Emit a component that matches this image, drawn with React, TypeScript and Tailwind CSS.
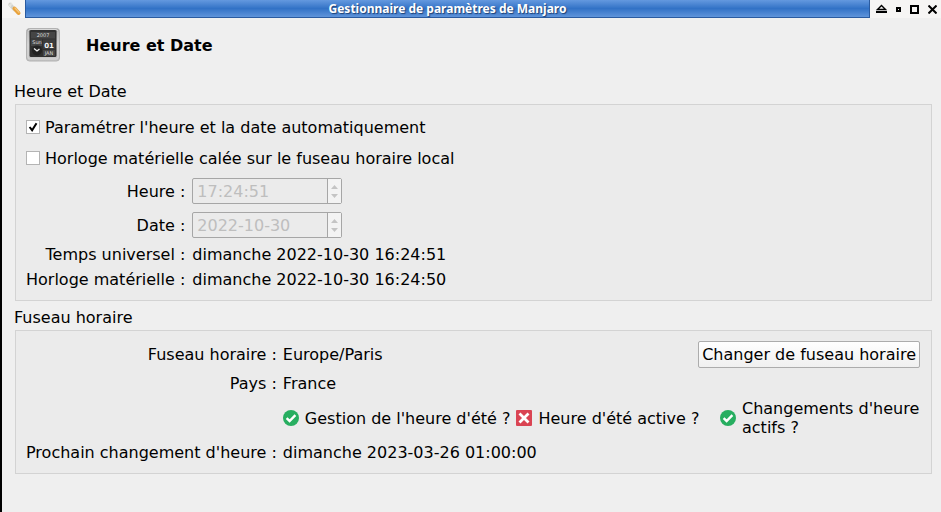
import { useState } from "react";
import type { ReactNode } from "react";

const universalTime = "dimanche 2022-10-30 16:24:51";
const hardwareClock = "dimanche 2022-10-30 16:24:50";

function WrenchIcon() {
  return (
    <svg width="16" height="16" viewBox="0 0 16 16" aria-hidden="true">
      <path d="M4 3.5 8.5 8.5" stroke="#d2d2cd" strokeWidth="3.6" strokeLinecap="round" />
      <path d="M2.4 3.6 4.4 5 5.6 1.8" stroke="#e6e6e0" strokeWidth="1.6" fill="none" />
      <path d="M8.5 7.5 12.5 12" stroke="#e9a23b" strokeWidth="4" strokeLinecap="round" />
      <path d="M9 7 13 11.4" stroke="#f6c77c" strokeWidth="1.2" strokeLinecap="round" />
    </svg>
  );
}

function ClockIcon() {
  return (
    <svg width="34" height="34" viewBox="0 0 34 34" aria-hidden="true" fontFamily="DejaVu Sans, sans-serif">
      <defs>
        <linearGradient id="frame" x1="0" y1="0" x2="0" y2="1">
          <stop offset="0" stopColor="#9c9c9c" />
          <stop offset="0.5" stopColor="#cfcfcf" />
          <stop offset="1" stopColor="#c4c4c4" />
        </linearGradient>
      </defs>
      <rect x="0.5" y="0.5" width="33" height="32.5" rx="3" fill="url(#frame)" stroke="#b2b2b2" />
      <rect x="2" y="1.5" width="30" height="29.5" rx="2" fill="none" stroke="#d8d8d8" />
      <rect x="3.5" y="2" width="27" height="27" rx="1.5" fill="#303030" />
      <rect x="5" y="4" width="24" height="6.5" fill="#454545" />
      <rect x="5" y="11.5" width="11" height="6.5" fill="#454545" />
      <rect x="17" y="11.5" width="12" height="9.5" fill="#3c3c3c" />
      <rect x="17" y="22" width="12" height="6" fill="#454545" />
      <circle cx="11" cy="22.5" r="5" fill="#222222" />
      <path d="M8 20.5 11 23 13.5 21" stroke="#f0f0f0" strokeWidth="1.3" fill="none" />
      <text x="17" y="9" fontSize="5" fill="#dddddd" textAnchor="middle">2007</text>
      <text x="11" y="16" fontSize="5" fill="#dddddd" textAnchor="middle">Sun</text>
      <text x="23" y="19.5" fontSize="7" fontWeight="bold" fill="#f4f4f4" textAnchor="middle">01</text>
      <text x="23" y="27" fontSize="5" fill="#dddddd" textAnchor="middle">JAN</text>
    </svg>
  );
}

function StatusIcon({ ok }: { ok: boolean }) {
  return ok ? (
    <svg className="shrink-0" width="16" height="16" viewBox="0 0 16 16" role="img" aria-label="Oui">
      <circle cx="8" cy="8" r="8" fill="#27ae60" />
      <path d="M3.6 8.2 6.6 11 12.4 5.2" stroke="#ffffff" strokeWidth="2.4" fill="none" />
    </svg>
  ) : (
    <svg className="shrink-0" width="16" height="16" viewBox="0 0 16 16" role="img" aria-label="Non">
      <rect width="16" height="16" rx="1" fill="#da4453" />
      <path d="M3.5 3.5 12.5 12.5M12.5 3.5 3.5 12.5" stroke="#ffffff" strokeWidth="2.8" />
    </svg>
  );
}

function TitleBar() {
  return (
    <header className="flex h-[18px] items-stretch bg-[#f6f5f4]">
      <div className="flex w-[23px] items-center pl-1">
        <WrenchIcon />
      </div>
      <h1 className="flex flex-1 items-center justify-center border-r border-b border-l border-[#2a5ba0] bg-linear-to-b from-[#6499df] via-[#3272c6] to-[#5f94da] pt-px font-['Noto_Sans',sans-serif] text-xs font-bold text-white [text-shadow:1px_1px_1px_#1d4075]">
        Gestionnaire de paramètres de Manjaro
      </h1>
      <div className="flex w-[71px] items-center justify-between pr-1 pl-[6px] text-black">
        <button type="button" aria-label="Enrouler">
          <svg className="block" width="11" height="10" viewBox="0 0 11 10">
            <path d="M1.5 5.5 5.5 1.5 9.5 5.5Z" fill="none" stroke="currentColor" strokeWidth="1.4" />
            <rect y="7" width="11" height="2" fill="currentColor" />
          </svg>
        </button>
        <button type="button" aria-label="Réduire">
          <svg className="block" width="5" height="5" viewBox="0 0 5 5">
            <path d="M1 1H4V4H1Z" fill="none" stroke="currentColor" strokeWidth="2" />
          </svg>
        </button>
        <button type="button" aria-label="Agrandir">
          <svg className="block" width="9" height="9" viewBox="0 0 9 9">
            <path d="M1 1H8V8H1Z" fill="none" stroke="currentColor" strokeWidth="2" />
          </svg>
        </button>
        <button type="button" aria-label="Fermer">
          <svg className="block" width="9" height="9" viewBox="0 0 9 9">
            <path d="M0.5 0.5 8.5 8.5M8.5 0.5 0.5 8.5" stroke="currentColor" strokeWidth="2" />
          </svg>
        </button>
      </div>
    </header>
  );
}

type CheckProps = { id: string; label: string; checked: boolean; onChange: (value: boolean) => void };

function Check({ id, label, checked, onChange }: CheckProps) {
  return (
    <div className="flex items-start gap-[5px]">
      <span className="grid pt-[2px]">
        <input
          id={id}
          type="checkbox"
          checked={checked}
          onChange={(e) => onChange(e.target.checked)}
          className="peer col-start-1 row-start-1 size-[14px] appearance-none border border-[#b4b4b4] bg-white"
        />
        <svg
          className="pointer-events-none invisible col-start-1 row-start-1 peer-checked:visible"
          width="14"
          height="14"
          viewBox="0 0 14 14"
        >
          <path d="M3.6 7 6.1 10.2 10.5 3.2" stroke="#000000" strokeWidth="2" fill="none" />
        </svg>
      </span>
      <label htmlFor={id}>{label}</label>
    </div>
  );
}

function SpinBox({ id, value }: { id: string; value: string }) {
  return (
    <div className="my-px flex h-[26px] w-[150px] rounded-xs border border-[#a6a6a6]">
      <input id={id} type="text" disabled defaultValue={value} className="min-w-0 flex-1 px-1 text-[#bebebe]" />
      <div className="flex w-[14px] flex-col items-center justify-center gap-[5px] border-l border-[#a6a6a6] bg-[#f3f3f3]">
        <button type="button" disabled aria-label="Augmenter">
          <svg className="block" width="7" height="4" viewBox="0 0 7 4">
            <path d="M0 4 3.5 0 7 4Z" fill="#c4c4c4" />
          </svg>
        </button>
        <button type="button" disabled aria-label="Diminuer">
          <svg className="block" width="7" height="4" viewBox="0 0 7 4">
            <path d="M0 0 3.5 4 7 0Z" fill="#c4c4c4" />
          </svg>
        </button>
      </div>
    </div>
  );
}

function Group({ title, children }: { title: string; children: ReactNode }) {
  return (
    <section>
      <h3 className="-ml-px mb-[3px]">{title}</h3>
      <div className="border border-[#d3d3d3] bg-[#ebebeb] pt-[10px] pr-[11px] pb-[11px] pl-[10px]">{children}</div>
    </section>
  );
}

export default function App() {
  const [auto, setAuto] = useState(true);
  const [localClock, setLocalClock] = useState(false);

  return (
    <div className="min-h-screen border-l-2 border-black bg-[#efefef] font-['DejaVu_Sans',sans-serif] text-base leading-[19px] text-black">
      <TitleBar />

      {/* Page heading */}
      <div className="flex items-center gap-[26px] px-6 pt-[10px]">
        <ClockIcon />
        <h2 className="font-bold">Heure et Date</h2>
      </div>

      <main className="flex flex-col gap-[7px] pt-5 pr-[9px] pb-5 pl-[13px]">
        <Group title="Heure et Date">
          <div className="flex flex-col gap-3 pt-[3px] pb-[9px]">
            <Check id="auto" label="Paramétrer l'heure et la date automatiquement" checked={auto} onChange={setAuto} />
            <Check
              id="local-clock"
              label="Horloge matérielle calée sur le fuseau horaire local"
              checked={localClock}
              onChange={setLocalClock}
            />
          </div>
          <div className="grid grid-cols-[auto_1fr] items-center gap-x-[7px] gap-y-[6px]">
            <label htmlFor="time" className="text-right">Heure :</label>
            <SpinBox id="time" value="17:24:51" />
            <label htmlFor="date" className="text-right">Date :</label>
            <SpinBox id="date" value="2022-10-30" />
            <span className="text-right">Temps universel :</span>
            <span>{universalTime}</span>
            <span className="text-right">Horloge matérielle :</span>
            <span>{hardwareClock}</span>
          </div>
        </Group>

        <Group title="Fuseau horaire">
          <div className="grid grid-cols-[auto_1fr] items-center gap-[6px]">
            <span className="text-right">Fuseau horaire :</span>
            <div className="flex items-center justify-between">
              <span>Europe/Paris</span>
              <button
                type="button"
                className="h-[27px] rounded-xs border border-[#acacac] bg-linear-to-b from-white to-[#f0f0f0] px-[3px] whitespace-nowrap"
              >
                Changer de fuseau horaire
              </button>
            </div>
            <span className="text-right">Pays :</span>
            <span>France</span>
            <div className="col-start-2 flex items-center gap-[6px]">
              <StatusIcon ok />
              <span className="whitespace-nowrap">Gestion de l'heure d'été ?</span>
              <StatusIcon ok={false} />
              <span className="whitespace-nowrap">Heure d'été active ?</span>
              <div className="ml-auto flex w-[200px] items-center gap-[6px]">
                <StatusIcon ok />
                <span>Changements d'heure actifs ?</span>
              </div>
            </div>
            <span className="text-right">Prochain changement d'heure :</span>
            <span>dimanche 2023-03-26 01:00:00</span>
          </div>
        </Group>
      </main>
    </div>
  );
}
